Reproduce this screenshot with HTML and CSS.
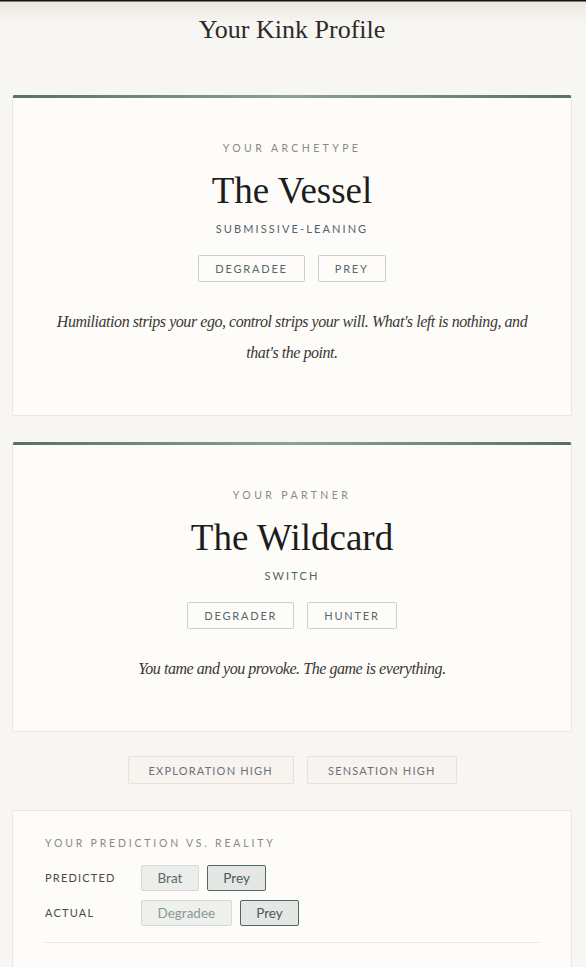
FILE: index.html
```html
<!DOCTYPE html>
<html lang="en">
<head>
<meta charset="utf-8">
<title>Your Kink Profile</title>
<link rel="stylesheet" href="styles.css">
</head>
<body>
<div class="page">
  <h1 class="page-title">Your Kink Profile</h1>

  <section class="card card-accent">
    <div class="eyebrow">Your Archetype</div>
    <h2 class="archetype">The Vessel</h2>
    <div class="leaning">Submissive-leaning</div>
    <div class="tags">
      <span class="tag">Degradee</span>
      <span class="tag">Prey</span>
    </div>
    <p class="quote">Humiliation strips your ego, control strips your will. What's left is nothing, and that's the point.</p>
  </section>

  <section class="card card-accent">
    <div class="eyebrow">Your Partner</div>
    <h2 class="archetype">The Wildcard</h2>
    <div class="leaning">Switch</div>
    <div class="tags">
      <span class="tag">Degrader</span>
      <span class="tag">Hunter</span>
    </div>
    <p class="quote">You tame and you provoke. The game is everything.</p>
  </section>

  <div class="pills">
    <span class="pill">Exploration High</span>
    <span class="pill">Sensation High</span>
  </div>

  <section class="card card-compare">
    <div class="eyebrow eyebrow-left">Your Prediction vs. Reality</div>
    <div class="compare-row">
      <span class="compare-label">Predicted</span>
      <div class="chips">
        <span class="chip">Brat</span>
        <span class="chip chip-active">Prey</span>
      </div>
    </div>
    <div class="compare-row">
      <span class="compare-label">Actual</span>
      <div class="chips">
        <span class="chip chip-faded">Degradee</span>
        <span class="chip chip-active">Prey</span>
      </div>
    </div>
    <hr class="divider">
    <div class="next-heading">Your dynamic</div>
  </section>
</div>
</body>
</html>
```

FILE: styles.css
```css
* { box-sizing: border-box; }

html, body {
  margin: 0;
  padding: 0;
}

body {
  background: linear-gradient(#121212 0, #121212 1px, #ece8e2 2px, #f8f6f2 24px) no-repeat, #f8f6f2;
  background-size: 100% 30px;
  font-family: "Lato", "Noto Sans", sans-serif;
  color: #2a2a2a;
}

.page {
  max-width: 586px;
  padding: 14px 14px 0 12px;
}

.page-title {
  margin: 0 0 49px;
  font-family: "Liberation Serif", serif;
  font-weight: 400;
  font-size: 26px;
  line-height: 32px;
  text-align: center;
  color: #2b2b2b;
}

.card {
  background: #fdfcf9;
  border: 1px solid #ebe6e0;
  border-radius: 2px;
}

.card-accent {
  border-top: 0;
  background: linear-gradient(90deg, #56716d 0%, #8aa19d 50%, #56716d 100%) top / 100% 3px no-repeat border-box, #fdfcf9;
  padding: 45px 40px 47px;
  text-align: center;
  margin-bottom: 26px;
}

.eyebrow {
  font-size: 10.5px;
  line-height: 16px;
  letter-spacing: 3.4px;
  text-transform: uppercase;
  color: #8d8883;
}

.archetype {
  margin: 13px 0 0;
  font-family: "Liberation Serif", serif;
  font-weight: 400;
  font-size: 37px;
  line-height: 44px;
  color: #1d1d1d;
}

.leaning {
  margin-top: 8px;
  font-size: 11px;
  line-height: 16px;
  letter-spacing: 2.1px;
  text-transform: uppercase;
  color: #52636b;
}

.tags {
  display: flex;
  justify-content: center;
  gap: 13px;
  margin-top: 18px;
}

.tag {
  display: inline-flex;
  align-items: center;
  height: 27px;
  padding: 0 16px;
  border: 1px solid #c7d1cd;
  border-radius: 2px;
  font-size: 11px;
  letter-spacing: 1.8px;
  text-transform: uppercase;
  color: #56686c;
}

.quote {
  margin: 24px 0 0;
  font-family: "Liberation Serif", serif;
  font-style: italic;
  font-size: 16px;
  line-height: 31px;
  letter-spacing: -0.45px;
  color: #3a3735;
}

.pills {
  display: flex;
  justify-content: center;
  gap: 13px;
  margin-bottom: 26px;
  margin-top: -2px;
}

.pill {
  display: inline-flex;
  align-items: center;
  height: 28px;
  padding: 0 20px;
  background: #f7f4f0;
  border: 1px solid #e6e1db;
  border-radius: 2px;
  font-size: 11px;
  letter-spacing: 1.2px;
  text-transform: uppercase;
  color: #6c7277;
}

.card-compare {
  padding: 24px 32px 0;
}

.eyebrow-left {
  text-align: left;
  letter-spacing: 2.8px;
  margin-bottom: 14px;
}

.compare-row {
  display: flex;
  align-items: center;
  margin-bottom: 9px;
}

.compare-label {
  width: 96px;
  flex: none;
  font-size: 11px;
  letter-spacing: 1.2px;
  text-transform: uppercase;
  color: #4b4b4b;
  margin-top: -2px;
}

.chips {
  display: flex;
  gap: 8px;
}

.chip {
  display: inline-flex;
  align-items: center;
  height: 26px;
  padding: 0 15.5px;
  background: #eceeeb;
  border: 1px solid #d6dad7;
  border-radius: 2px;
  font-size: 13.5px;
  color: #5e6b6a;
}

.chip-faded {
  background: #eef0ed;
  color: #8b9896;
}

.chip-active {
  background: #e4e7e3;
  border-color: #4d6865;
  color: #475b59;
}

.divider {
  border: 0;
  border-top: 1px solid #e8e4de;
  margin: 16px 0 0;
}

.next-heading {
  margin-top: 20px;
  font-family: "Liberation Serif", serif;
  font-size: 18px;
  line-height: 22px;
  color: #2b2b2b;
  padding-bottom: 40px;
}
```
